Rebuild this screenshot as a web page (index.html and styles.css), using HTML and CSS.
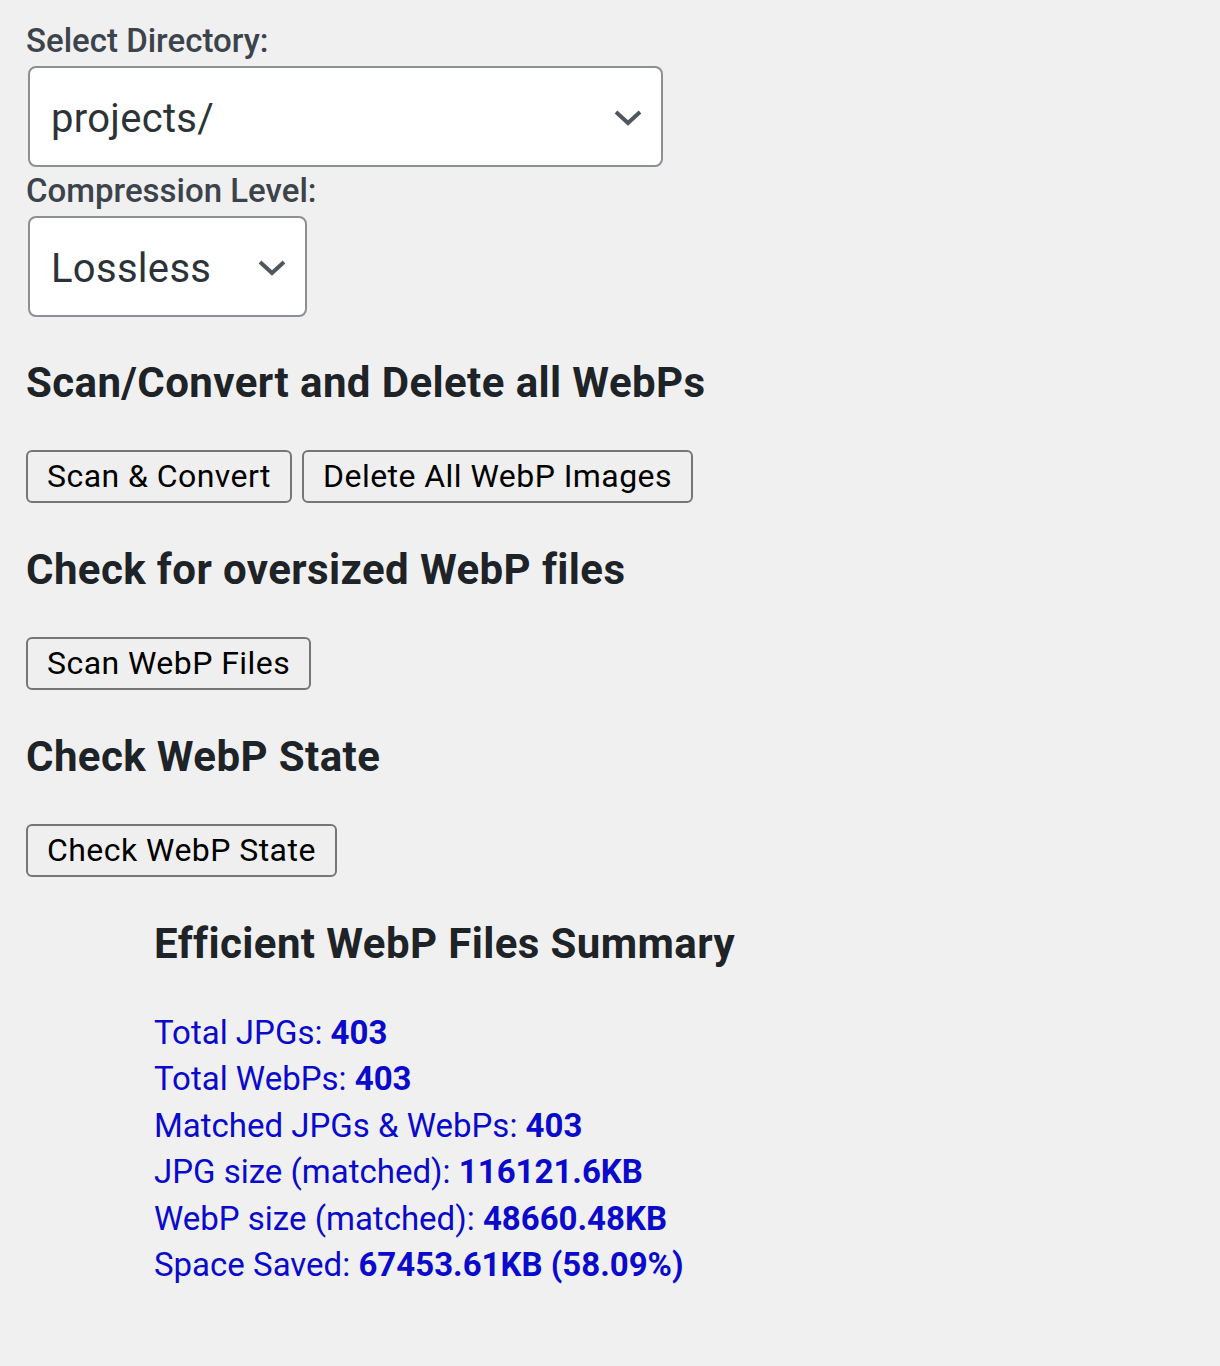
FILE: index.html
```html
<!DOCTYPE html>
<html lang="en">
<head>
<meta charset="utf-8">
<title>WebP Tools</title>
<link rel="stylesheet" href="styles.css">
</head>
<body>
<main class="page">
  <form class="settings">
    <label class="field-label" for="dir">Select Directory:</label>
    <div class="select-wrap select-wide">
      <select id="dir" class="select"><option>projects/</option></select>
      <svg class="chev" viewBox="0 0 28 16" aria-hidden="true"><path d="M2 2 L14 13 L26 2" fill="none" stroke="#50575e" stroke-width="4"/></svg>
    </div>
    <label class="field-label" for="lvl">Compression Level:</label>
    <div class="select-wrap select-narrow">
      <select id="lvl" class="select"><option>Lossless</option></select>
      <svg class="chev" viewBox="0 0 28 16" aria-hidden="true"><path d="M2 2 L14 13 L26 2" fill="none" stroke="#50575e" stroke-width="4"/></svg>
    </div>
  </form>

  <section class="block">
    <h2 class="heading">Scan/Convert and Delete all WebPs</h2>
    <div class="btn-row">
      <button class="btn" type="button">Scan &amp; Convert</button>
      <button class="btn" type="button">Delete All WebP Images</button>
    </div>
  </section>

  <section class="block">
    <h2 class="heading">Check for oversized WebP files</h2>
    <div class="btn-row">
      <button class="btn" type="button">Scan WebP Files</button>
    </div>
  </section>

  <section class="block">
    <h2 class="heading">Check WebP State</h2>
    <div class="btn-row">
      <button class="btn" type="button">Check WebP State</button>
    </div>
  </section>

  <section class="summary">
    <h3 class="heading">Efficient WebP Files Summary</h3>
    <ul class="stats">
      <li>Total JPGs: <strong>403</strong></li>
      <li>Total WebPs: <strong>403</strong></li>
      <li>Matched JPGs &amp; WebPs: <strong>403</strong></li>
      <li>JPG size (matched): <strong>116121.6KB</strong></li>
      <li>WebP size (matched): <strong>48660.48KB</strong></li>
      <li>Space Saved: <strong>67453.61KB (58.09%)</strong></li>
    </ul>
  </section>
</main>
</body>
</html>
```

FILE: styles.css
```css
html, body {
  margin: 0;
  padding: 0;
  background: #f0f0f1;
}
body {
  font-family: Roboto, "Liberation Sans", sans-serif;
  color: #3c434a;
}
.page {
  padding: 21px 0 0 26px;
  display: flex;
  flex-direction: column;
}
.settings {
  display: flex;
  flex-direction: column;
  align-items: flex-start;
}
.field-label {
  display: block;
  font-size: 33px;
  font-weight: 500;
  line-height: 40px;
  color: #3c434a;
  margin-bottom: 5px;
}
.select-wrap {
  position: relative;
  margin-left: 2px;
  margin-bottom: 4px;
}
.select-wrap:last-child {
  margin-bottom: 0;
}
.select-wide { width: 635px; }
.select-narrow { width: 279px; }
.select {
  appearance: none;
  -webkit-appearance: none;
  display: block;
  width: 100%;
  height: 101px;
  box-sizing: border-box;
  border: 2px solid #8c8f94;
  border-radius: 8px;
  background: #fff;
  font-family: Roboto, "Liberation Sans", sans-serif;
  font-size: 40px;
  letter-spacing: 0.3px;
  color: #2c3338;
  padding: 4px 60px 0 21px;
  margin: 0;
}
.chev {
  position: absolute;
  width: 28px;
  height: 16px;
  right: 21px;
  top: 44px;
  pointer-events: none;
}
.block {
  display: flex;
  flex-direction: column;
  align-items: flex-start;
}
.heading {
  margin: 41px 0 0;
  font-size: 42px;
  letter-spacing: 0.4px;
  font-weight: 700;
  color: #1d2327;
  line-height: 50px;
}
.btn-row {
  display: flex;
  gap: 10px;
  margin-top: 42px;
}
.btn {
  font-family: Roboto, "Liberation Sans", sans-serif;
  font-size: 32px;
  letter-spacing: 0.45px;
  color: #000;
  background: #efefef;
  border: 2px solid #767676;
  border-radius: 6px;
  height: 53px;
  padding: 0 19px 2px;
  margin: 0 0 1px;
}
.summary {
  margin-left: 128px;
}
.stats {
  list-style: none;
  margin: 41px 0 0;
  padding: 0;
  color: #0a0acc;
  font-size: 33px;
  line-height: 46.4px;
}
.stats strong {
  font-weight: 700;
}
```
